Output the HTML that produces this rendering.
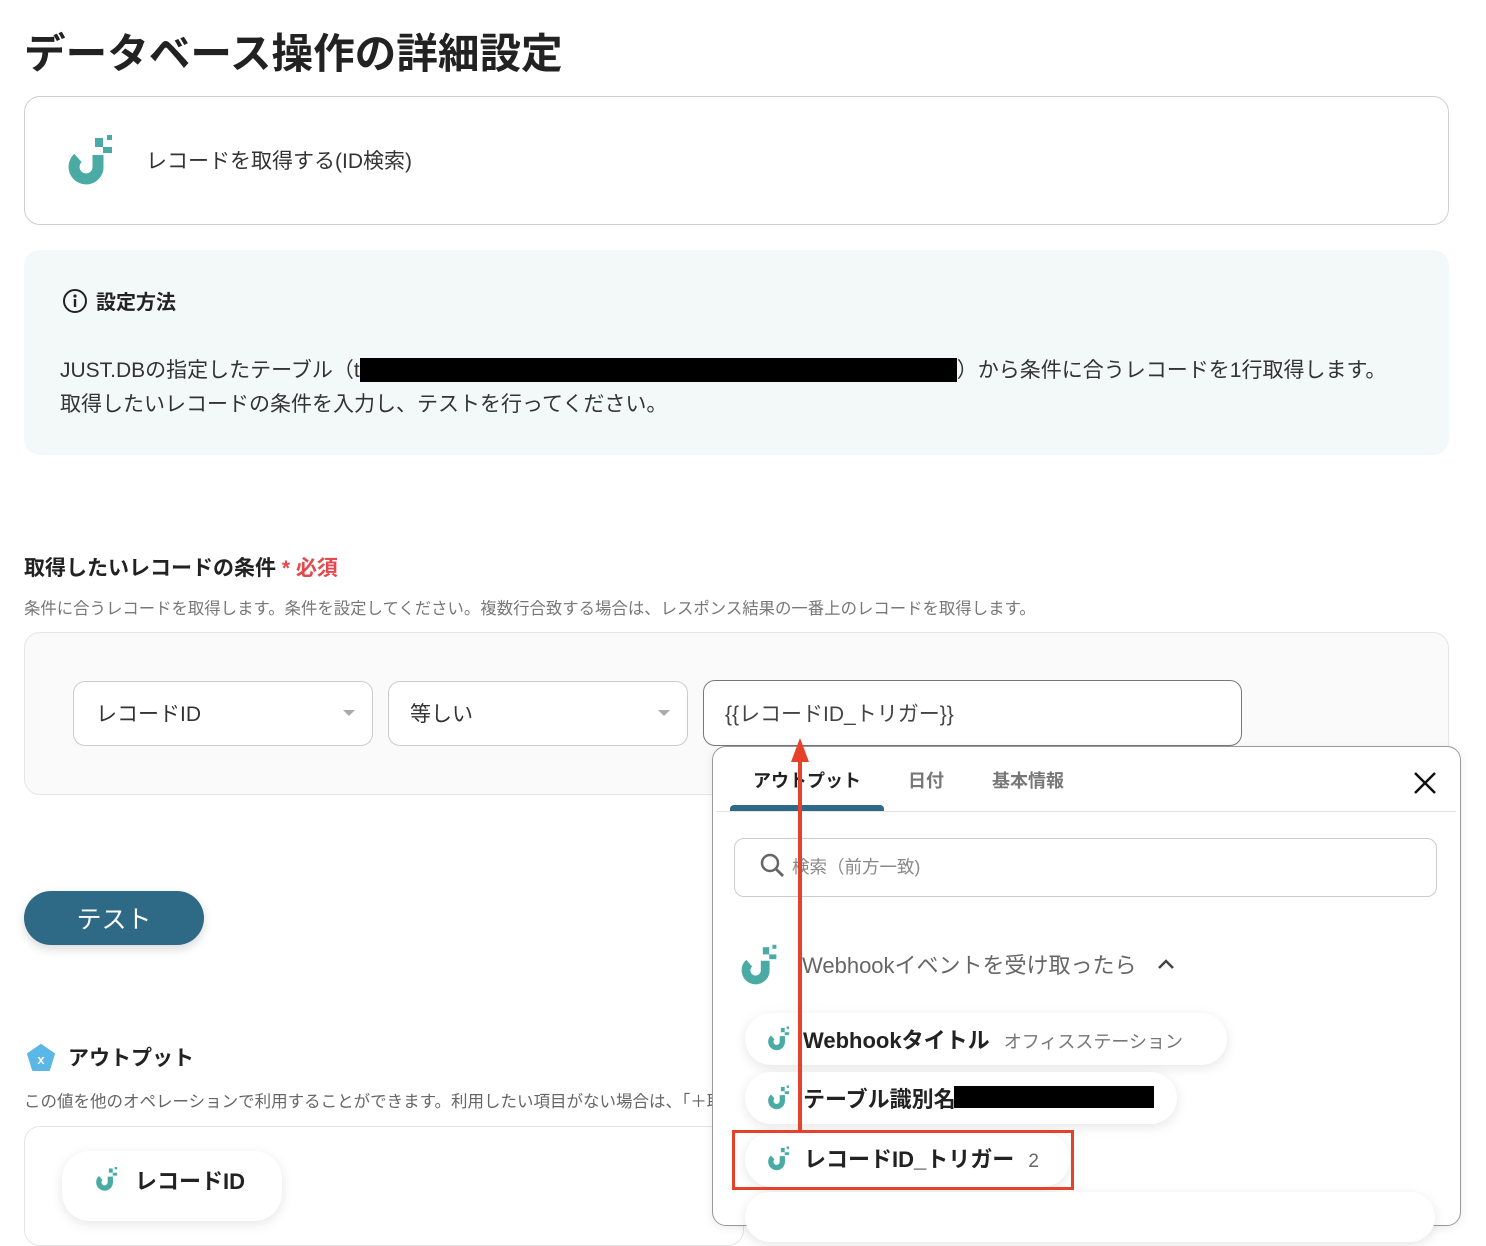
<!DOCTYPE html>
<html><head><meta charset="utf-8"><style>
*{box-sizing:border-box;margin:0;padding:0}
body{width:1486px;height:1202px;overflow:hidden;background:#fff;font-family:"Liberation Sans","Noto Sans CJK JP",sans-serif;color:#222;position:relative}
.a{position:absolute;white-space:nowrap}
.box{position:absolute}
.lg{position:absolute}
.pill{position:absolute;background:#fff;border-radius:28px;box-shadow:0 3px 12px rgba(0,0,0,.10)}
</style></head><body>
<svg width="0" height="0" style="position:absolute"><defs><symbol id="lg" viewBox="0 0 50 52"><path d="M14 25 A12 12 0 1 0 34 35 L34 22" fill="none" stroke="#4aaba5" stroke-width="11"/><rect x="31" y="5" width="8" height="9" fill="#4aaba5"/><rect x="43" y="2" width="5" height="5" fill="#4aaba5"/><rect x="39" y="14" width="9" height="6" fill="#4aaba5"/></symbol></defs></svg>

<div class="a" style="left:24px;top:20px;font-size:41.6px;font-weight:bold;color:#222">データベース操作の詳細設定</div>

<div class="box" style="left:24px;top:96px;width:1425px;height:129px;border:1px solid #cfcfcf;border-radius:16px"></div>
<svg class="lg" style="left:64px;top:133px" width="50" height="52"><use href="#lg"/></svg>
<div class="a" style="left:146px;top:145px;font-size:21px;color:#333">レコードを取得する(ID検索)</div>

<div class="box" style="left:24px;top:250px;width:1425px;height:205px;background:#f3f8f8;border-radius:16px"></div>
<svg class="a" style="left:62px;top:288px" width="26" height="26" viewBox="0 0 26 26"><circle cx="13" cy="13" r="11" fill="none" stroke="#222" stroke-width="2"/><circle cx="13" cy="8" r="1.6" fill="#222"/><rect x="11.8" y="11" width="2.4" height="8" fill="#222"/></svg>
<div class="a" style="left:96px;top:286px;font-size:20px;font-weight:bold">設定方法</div>
<div class="a" style="left:60px;top:354px;font-size:21px;color:#333">JUST.DBの指定したテーブル（t<span style="display:inline-block;width:597px;height:24px;background:#000;vertical-align:-5px"></span>）から条件に合うレコードを1行取得します。</div>
<div class="a" style="left:60px;top:388px;font-size:21px;color:#333">取得したいレコードの条件を入力し、テストを行ってください。</div>

<div class="a" style="left:24px;top:552px;font-size:21px;font-weight:bold">取得したいレコードの条件 <span style="color:#e5484d">* 必須</span></div>
<div class="a" style="left:24px;top:595px;font-size:16.4px;color:#777">条件に合うレコードを取得します。条件を設定してください。複数行合致する場合は、レスポンス結果の一番上のレコードを取得します。</div>

<div class="box" style="left:24px;top:632px;width:1425px;height:163px;background:#fafafa;border:1px solid #e5e5e5;border-radius:16px"></div>
<div class="box" style="left:73px;top:681px;width:300px;height:65px;background:#fff;border:1px solid #ccc;border-radius:12px"></div>
<div class="a" style="left:96px;top:698px;font-size:21px;color:#333">レコードID</div>
<div class="a" style="left:343px;top:710px;width:0;height:0;border-left:6px solid transparent;border-right:6px solid transparent;border-top:6px solid #aaa"></div>
<div class="box" style="left:388px;top:681px;width:300px;height:65px;background:#fff;border:1px solid #ccc;border-radius:12px"></div>
<div class="a" style="left:410px;top:698px;font-size:21px;color:#333">等しい</div>
<div class="a" style="left:658px;top:710px;width:0;height:0;border-left:6px solid transparent;border-right:6px solid transparent;border-top:6px solid #aaa"></div>
<div class="box" style="left:703px;top:680px;width:539px;height:66px;background:#fff;border:1px solid #777;border-radius:12px"></div>
<div class="a" style="left:725px;top:698px;font-size:21px;color:#444">{{レコードID_トリガー}}</div>

<div class="box" style="left:24px;top:891px;width:180px;height:54px;background:#2e6a86;border-radius:27px;box-shadow:0 4px 10px rgba(0,0,0,.15)"></div>
<div class="a" style="left:24px;top:900px;width:180px;text-align:center;font-size:25px;color:#fff">テスト</div>

<svg class="a" style="left:26px;top:1043px" width="30" height="30" viewBox="0 0 30 30"><path d="M15 2 L28 11 L23 27 L7 27 L2 11 Z" fill="#5bb8e6" stroke="#5bb8e6" stroke-width="2" stroke-linejoin="round"/><text x="15" y="21" font-size="13" fill="#fff" text-anchor="middle" font-family="Liberation Sans" font-weight="bold">x</text></svg>
<div class="a" style="left:68px;top:1042px;font-size:21px;font-weight:bold">アウトプット</div>
<div class="a" style="left:24px;top:1088px;font-size:16.5px;color:#666">この値を他のオペレーションで利用することができます。利用したい項目がない場合は、「＋取得する値を追加」</div>
<div class="box" style="left:24px;top:1126px;width:720px;height:120px;border:1px solid #e5e5e5;border-radius:16px"></div>
<div class="pill" style="left:62px;top:1151px;width:220px;height:70px"></div>
<svg class="lg" style="left:94px;top:1166px" width="24" height="25"><use href="#lg"/></svg>
<div class="a" style="left:135px;top:1164px;font-size:22px;font-weight:bold">レコードID</div>

<div class="box" style="left:712px;top:746px;width:749px;height:480px;background:#fff;border:1px solid #999;border-radius:14px;box-shadow:0 2px 10px rgba(0,0,0,.08)"></div>
<div class="a" style="left:753px;top:767px;font-size:18px;font-weight:bold">アウトプット</div>
<div class="a" style="left:908px;top:767px;font-size:18px;font-weight:bold;color:#777">日付</div>
<div class="a" style="left:992px;top:767px;font-size:18px;font-weight:bold;color:#777">基本情報</div>
<div class="box" style="left:730px;top:805px;width:154px;height:6px;background:#2e6a86;border-radius:4px 4px 0 0"></div>
<div class="box" style="left:716px;top:811px;width:740px;height:1px;background:#e3e3e3"></div>
<svg class="a" style="left:1413px;top:771px" width="24" height="24" viewBox="0 0 24 24"><path d="M2 2L22 22M22 2L2 22" stroke="#111" stroke-width="2.5"/></svg>
<div class="box" style="left:734px;top:838px;width:703px;height:59px;border:1px solid #ccc;border-radius:10px"></div>
<svg class="a" style="left:760px;top:853px" width="26" height="26" viewBox="0 0 26 26"><circle cx="10" cy="10" r="8" fill="none" stroke="#666" stroke-width="2.5"/><path d="M16 16L23 23" stroke="#666" stroke-width="2.8"/></svg>
<div class="a" style="left:792px;top:854px;font-size:17.5px;color:#888">検索（前方一致)</div>

<svg class="lg" style="left:738px;top:943px" width="40" height="42"><use href="#lg"/></svg>
<div class="a" style="left:802px;top:948px;font-size:22px;color:#666">Webhookイベントを受け取ったら</div>
<svg class="a" style="left:1157px;top:958px" width="18" height="12" viewBox="0 0 18 12"><path d="M2 10L9 3L16 10" fill="none" stroke="#444" stroke-width="2.5"/></svg>

<div class="pill" style="left:745px;top:1013px;width:482px;height:52px"></div>
<svg class="lg" style="left:766px;top:1025px" width="24" height="26"><use href="#lg"/></svg>
<div class="a" style="left:803px;top:1023px;font-size:22px;font-weight:bold">Webhookタイトル <span style="font-size:18px;font-weight:normal;color:#777;margin-left:8px">オフィスステーション</span></div>
<div class="pill" style="left:745px;top:1072px;width:432px;height:52px"></div>
<svg class="lg" style="left:766px;top:1084px" width="24" height="26"><use href="#lg"/></svg>
<div class="a" style="left:803px;top:1082px;font-size:22px;font-weight:bold">テーブル識別名</div>
<div class="box" style="left:954px;top:1086px;width:200px;height:22px;background:#000"></div>
<div class="pill" style="left:745px;top:1132px;width:325px;height:55px"></div>
<svg class="lg" style="left:766px;top:1145px" width="24" height="26"><use href="#lg"/></svg>
<div class="a" style="left:804px;top:1142px;font-size:22px;font-weight:bold">レコードID_トリガー <span style="font-size:19px;font-weight:normal;color:#666;margin-left:8px">2</span></div>
<div class="pill" style="left:745px;top:1192px;width:690px;height:50px"></div>
<div class="box" style="left:732px;top:1130px;width:342px;height:60px;border:3px solid #e5412b"></div>

<svg class="a" style="left:788px;top:736px" width="24" height="396" viewBox="0 0 24 396"><path d="M12 20 L12 394" stroke="#e5412b" stroke-width="4"/><path d="M3 26 L12 2 L21 26 Z" fill="#e5412b"/></svg>
</body></html>
